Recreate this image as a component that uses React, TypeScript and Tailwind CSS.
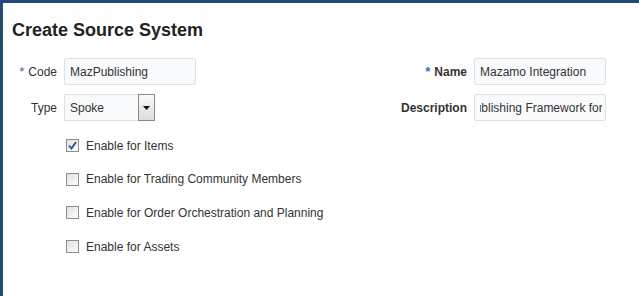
import * as React from "react";

const font = { fontFamily: '"Liberation Sans", Arial, sans-serif' };

const options = [
  { label: "Enable for Items", checked: true },
  { label: "Enable for Trading Community Members", checked: false },
  { label: "Enable for Order Orchestration and Planning", checked: false },
  { label: "Enable for Assets", checked: false },
];

function Req() {
  return <span className="text-[#2f6db5] text-[13px] leading-none self-start mt-[2px] mr-[4px]">*</span>;
}

function TextBox({ value, shift }: { value: string; shift?: boolean }) {
  return (
    <div className="h-[27px] w-[132px] border border-[#dde2e7] bg-[#f8fafc] rounded-[2px] flex items-center pl-[5px] pr-[3px] text-[12px] text-[#333]">
      <div className="flex-1 overflow-hidden whitespace-nowrap">
        <span className={shift ? "block -ml-[36px]" : ""}>{value}</span>
      </div>
    </div>
  );
}

function Checkbox({ checked }: { checked: boolean }) {
  return (
    <div className="w-[13px] h-[13px] border border-[#8e8e8e] bg-gradient-to-br from-[#e2e2e2] to-[#fcfcfc] flex items-center justify-center">
      {checked && (
        <svg width="9" height="9" viewBox="0 0 9 9">
          <path d="M1 4.5 L3.5 7.5 L8 1" fill="none" stroke="#2b4f9c" strokeWidth="1.8" />
        </svg>
      )}
    </div>
  );
}

export default function App() {
  return (
    <div className="w-[639px] h-[296px] bg-[#214c74] pt-[3px] pl-[3px] overflow-hidden" style={font}>
      <div className="w-full h-full bg-white">
        <h1 className="pl-[9px] pt-[16px] text-[18px] font-bold text-[#222] leading-[22px]">Create Source System</h1>

        <div className="mt-[17px] grid grid-cols-[54px_132px_177px_80px_132px] gap-x-[7px] gap-y-[9px] items-center text-[12px] text-[#333]">
          <div className="flex justify-end items-center">
            <Req />
            <span>Code</span>
          </div>
          <TextBox value="MazPublishing" />
          <div />
          <div className="flex justify-end items-center font-bold">
            <Req />
            <span>Name</span>
          </div>
          <TextBox value="Mazamo Integration" />

          <div className="text-right">Type</div>
          <div className="h-[27px] w-[91px] flex">
            <div className="flex-1 border border-[#dde2e7] border-r-0 bg-[#f8fafc] flex items-center pl-[5px]">Spoke</div>
            <div className="w-[17px] border border-[#8a8a8a] bg-gradient-to-b from-[#fafafa] to-[#dcdcdc] flex items-center justify-center">
              <svg width="7" height="4" viewBox="0 0 7 4">
                <path d="M0 0 H7 L3.5 4 Z" fill="#111" />
              </svg>
            </div>
          </div>
          <div />
          <div className="text-right font-bold">Description</div>
          <TextBox value="MazPublishing Framework for Mazamo" shift />
        </div>

        <div className="mt-[18px] pl-[63px] flex flex-col gap-[20.7px] text-[12px] text-[#333]">
          {options.map((o, i) => (
            <div key={i} className="flex items-center h-[13px] gap-[7px]">
              <Checkbox checked={o.checked} />
              <span>{o.label}</span>
            </div>
          ))}
        </div>
      </div>
    </div>
  );
}
